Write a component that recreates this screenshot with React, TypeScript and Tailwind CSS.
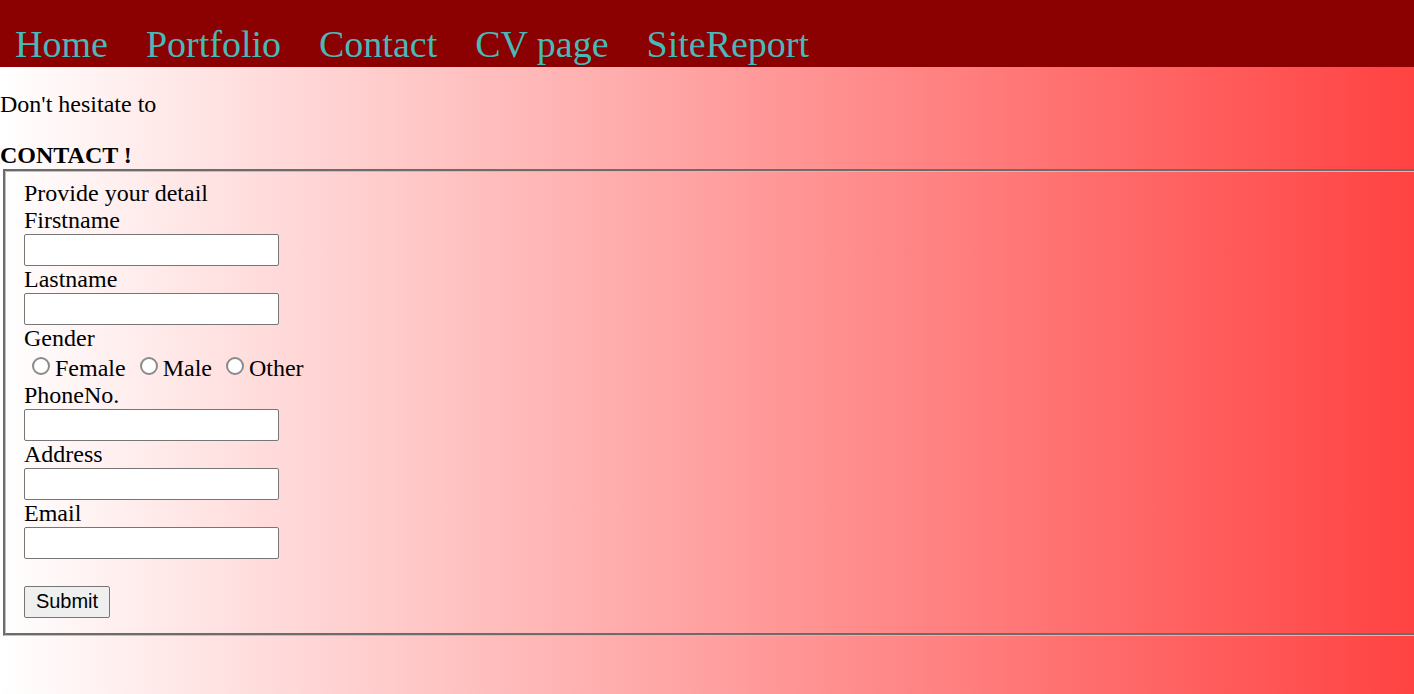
const links = ['Home', 'Portfolio', 'Contact', 'CV page', 'SiteReport'];
const genders = ['Female', 'Male', 'Other'];

function TextField({ label, name, type = 'text' }: { label: string; name: string; type?: string }) {
  return (
    <div className="flex flex-col items-start">
      <label htmlFor={name}>{label}</label>
      <input
        id={name}
        name={name}
        type={type}
        className="h-8 w-[255px] rounded-[2px] border border-[#767676] bg-white px-[3px] font-['Liberation_Sans',Arial,sans-serif] text-[20px]"
      />
    </div>
  );
}

export default function App() {
  return (
    <div className="min-h-screen bg-[linear-gradient(to_right,#ffffff,#ff4242)] font-['Liberation_Serif','Times_New_Roman',serif] text-2xl leading-[27px] text-black">
      <nav className="flex flex-wrap gap-x-[38px] bg-[#8b0000] px-[15px] pt-[22px] pb-px text-[38px] leading-[44px] text-[#48b8b8]">
        {links.map((link) => (
          <a key={link} href="#">
            {link}
          </a>
        ))}
      </nav>

      <main className="pt-6">
        <p className="mb-6">Don't hesitate to</p>
        <h1 className="font-bold">CONTACT !</h1>

        <form>
          <fieldset className="ml-[3px] border-[3px] border-r-0 border-[#c0c0c0] px-[18px] pt-2 pb-[15px] [border-style:groove]">
            <p>Provide your detail</p>
            <TextField label="Firstname" name="firstname" />
            <TextField label="Lastname" name="lastname" />
            <div role="radiogroup" aria-labelledby="gender">
              <p id="gender">Gender</p>
              <div className="flex gap-[14px] pt-[3px] pl-2">
                {genders.map((gender) => (
                  <label key={gender} className="flex items-start gap-[5px]">
                    <input
                      type="radio"
                      name="gender"
                      value={gender}
                      className="mt-[2px] size-[18px] appearance-none rounded-full border-2 border-[#8a8a8a] bg-white checked:border-[#0075ff] checked:bg-[#0075ff] checked:shadow-[inset_0_0_0_2px_#ffffff]"
                    />
                    {gender}
                  </label>
                ))}
              </div>
            </div>
            <TextField label="PhoneNo." name="phone" type="tel" />
            <TextField label="Address" name="address" />
            <TextField label="Email" name="email" type="email" />
            <button
              type="submit"
              className="mt-[27px] block h-8 w-[86px] rounded-[2px] border border-[#767676] bg-[#efefef] pb-[2px] text-center font-['Liberation_Sans',Arial,sans-serif] text-[20px] leading-[28px]"
            >
              Submit
            </button>
          </fieldset>
        </form>
      </main>
    </div>
  );
}
